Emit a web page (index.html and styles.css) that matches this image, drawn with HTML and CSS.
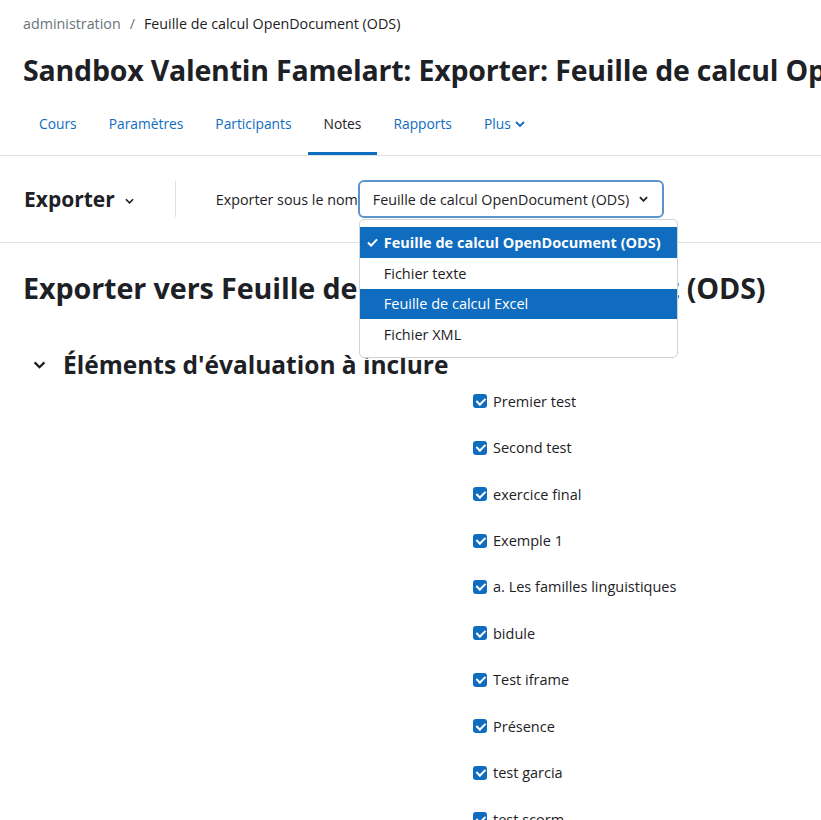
FILE: index.html
```html
<!DOCTYPE html>
<html lang="fr">
<head>
<meta charset="utf-8">
<title>Exporter</title>
<link rel="stylesheet" href="styles.css">
</head>
<body>
<div class="header">
  <nav class="breadcrumb"><span class="crumb-link">administration</span><span class="sep">/</span><span>Feuille de calcul OpenDocument (ODS)</span></nav>
  <h1 class="title">Sandbox Valentin Famelart: Exporter: Feuille de calcul OpenDocument (ODS)</h1>
</div>
<div class="tabs">
  <span class="tab">Cours</span>
  <span class="tab">Paramètres</span>
  <span class="tab">Participants</span>
  <span class="tab active">Notes</span>
  <span class="tab">Rapports</span>
  <span class="tab">Plus <svg class="tab-chev" viewBox="0 0 10 6" width="10" height="6"><path d="M1 1l4 4 4-4" fill="none" stroke="currentColor" stroke-width="1.8"/></svg></span>
</div>
<div class="tertiary">
  <div class="tert-title">Exporter <svg class="small-chev" viewBox="0 0 10 6" width="9" height="6"><path d="M1 1l4 4 4-4" fill="none" stroke="currentColor" stroke-width="1.8"/></svg></div>
  <div class="divider"></div>
  <div class="field">
    <span class="field-label">Exporter sous le nom</span>
    <div class="select-wrap">
      <div class="select">Feuille de calcul OpenDocument (ODS) <svg class="sel-chev" viewBox="0 0 10 6" width="9" height="6"><path d="M1 1l4 4 4-4" fill="none" stroke="currentColor" stroke-width="2"/></svg></div>
      <ul class="menu">
        <li class="opt selected"><svg class="check" viewBox="0 0 12 10" width="11" height="9"><path d="M1 5l3.5 3.5L11 1.5" fill="none" stroke="#fff" stroke-width="2.2"/></svg>Feuille de calcul OpenDocument (ODS)</li>
        <li class="opt">Fichier texte</li>
        <li class="opt hover">Feuille de calcul Excel</li>
        <li class="opt">Fichier XML</li>
      </ul>
    </div>
  </div>
</div>
<main class="content">
  <h2 class="export-title">Exporter vers Feuille de calcul OpenDocument (ODS)</h2>
  <h3 class="section"><svg class="sec-chev" viewBox="0 0 14 9" width="13" height="8"><path d="M1.5 1.5l5.5 5.5 5.5-5.5" fill="none" stroke="currentColor" stroke-width="2.6"/></svg>Éléments d'évaluation à inclure</h3>
  <ul class="items">
    <li class="item"><span class="cb"></span>Premier test</li>
    <li class="item"><span class="cb"></span>Second test</li>
    <li class="item"><span class="cb"></span>exercice final</li>
    <li class="item"><span class="cb"></span>Exemple 1</li>
    <li class="item"><span class="cb"></span>a. Les familles linguistiques</li>
    <li class="item"><span class="cb"></span>bidule</li>
    <li class="item"><span class="cb"></span>Test iframe</li>
    <li class="item"><span class="cb"></span>Présence</li>
    <li class="item"><span class="cb"></span>test garcia</li>
    <li class="item"><span class="cb"></span>test scorm</li>
  </ul>
</main>
</body>
</html>
```
FILE: styles.css
```css
* { box-sizing: border-box; }
html, body { margin: 0; padding: 0; }
body {
  width: 821px;
  height: 820px;
  overflow: hidden;
  font-family: "Open Sans", "Noto Sans", sans-serif;
  font-size: 15px;
  color: #1d2125;
  background: #fff;
}
.header { padding: 12px 0 0 23px; }
.breadcrumb { height: 24px; line-height: 24px; font-size: 14.3px; white-space: nowrap; }
.crumb-link { color: #6a737b; }
.sep { color: #6a737b; margin: 0 9px; }
.title {
  margin: 17px 0 0;
  font-size: 28.5px;
  line-height: 34px;
  font-weight: 700;
  white-space: nowrap;
  letter-spacing: -0.2px;
}
.tabs {
  display: flex;
  margin-top: 8px;
  padding-left: 23px;
  border-bottom: 1px solid #dee2e6;
  height: 61px;
}
.tab {
  display: flex;
  align-items: center;
  padding: 0 16px;
  color: #0f6cbf;
  font-size: 13.8px;
  border-bottom: 3px solid transparent;
  white-space: nowrap;
}
.tab.active { color: #1d2125; border-bottom-color: #0f6cbf; }
.tab-chev { margin-left: 4px; }
.tertiary {
  display: flex;
  align-items: center;
  height: 87px;
  padding-left: 24px;
  border-bottom: 1px solid #dee2e6;
}
.tert-title {
  font-size: 21px;
  font-weight: 700;
  display: flex;
  align-items: center;
  gap: 10px;
}
.small-chev { margin-top: 3px; }
.divider { width: 1px; height: 36px; background: #dee2e6; margin: 0 40px 0 41px; }
.field { display: flex; align-items: center; }
.field-label { font-size: 14.3px; margin-right: 0; white-space: nowrap; }
.select-wrap { position: relative; }
.select {
  width: 306px;
  height: 38px;
  border: 2px solid #5d93cb;
  border-radius: 6px;
  display: flex;
  align-items: center;
  padding: 0 13px;
  font-size: 14.3px;
  white-space: nowrap;
  justify-content: space-between;
}
.sel-chev { margin-right: 1px; }
.menu {
  position: absolute;
  left: 1px;
  top: 39px;
  width: 319px;
  margin: 0;
  padding: 7px 0;
  list-style: none;
  background: #fff;
  border: 1px solid #cfd3d7;
  border-radius: 5px;
  z-index: 5;
}
.opt {
  height: 30.8px;
  display: flex;
  align-items: center;
  padding-left: 24px;
  font-size: 14.5px;
  white-space: nowrap;
  position: relative;
}
.opt.selected { background: #0f6cbf; color: #fff; font-weight: 700; }
.opt.hover { background: #0f6cbf; color: #fff; }
.check { position: absolute; left: 7px; top: 11px; }
.content { padding-left: 23px; }
.export-title {
  margin: 27px 0 0;
  font-size: 28.7px;
  line-height: 36px;
  font-weight: 700;
  white-space: nowrap;
  letter-spacing: -0.1px;
}
.section {
  margin: 44px 0 0;
  font-size: 24.5px;
  line-height: 30px;
  font-weight: 700;
  display: flex;
  align-items: center;
  white-space: nowrap;
}
.sec-chev { margin: 0 17px 0 10px; }
.items { list-style: none; margin: -2px 0 0 450px; padding: 0; }
.item {
  height: 46.45px;
  display: flex;
  align-items: center;
  font-size: 14.5px;
  white-space: nowrap;
}
.cb {
  width: 14px;
  height: 14px;
  border-radius: 3px;
  background: #0f6cbf;
  margin-right: 6px;
  position: relative;
}
.cb::after {
  content: "";
  position: absolute;
  left: 4.5px;
  top: 1.5px;
  width: 3.5px;
  height: 7px;
  border: solid #fff;
  border-width: 0 2px 2px 0;
  transform: rotate(45deg);
}
```
